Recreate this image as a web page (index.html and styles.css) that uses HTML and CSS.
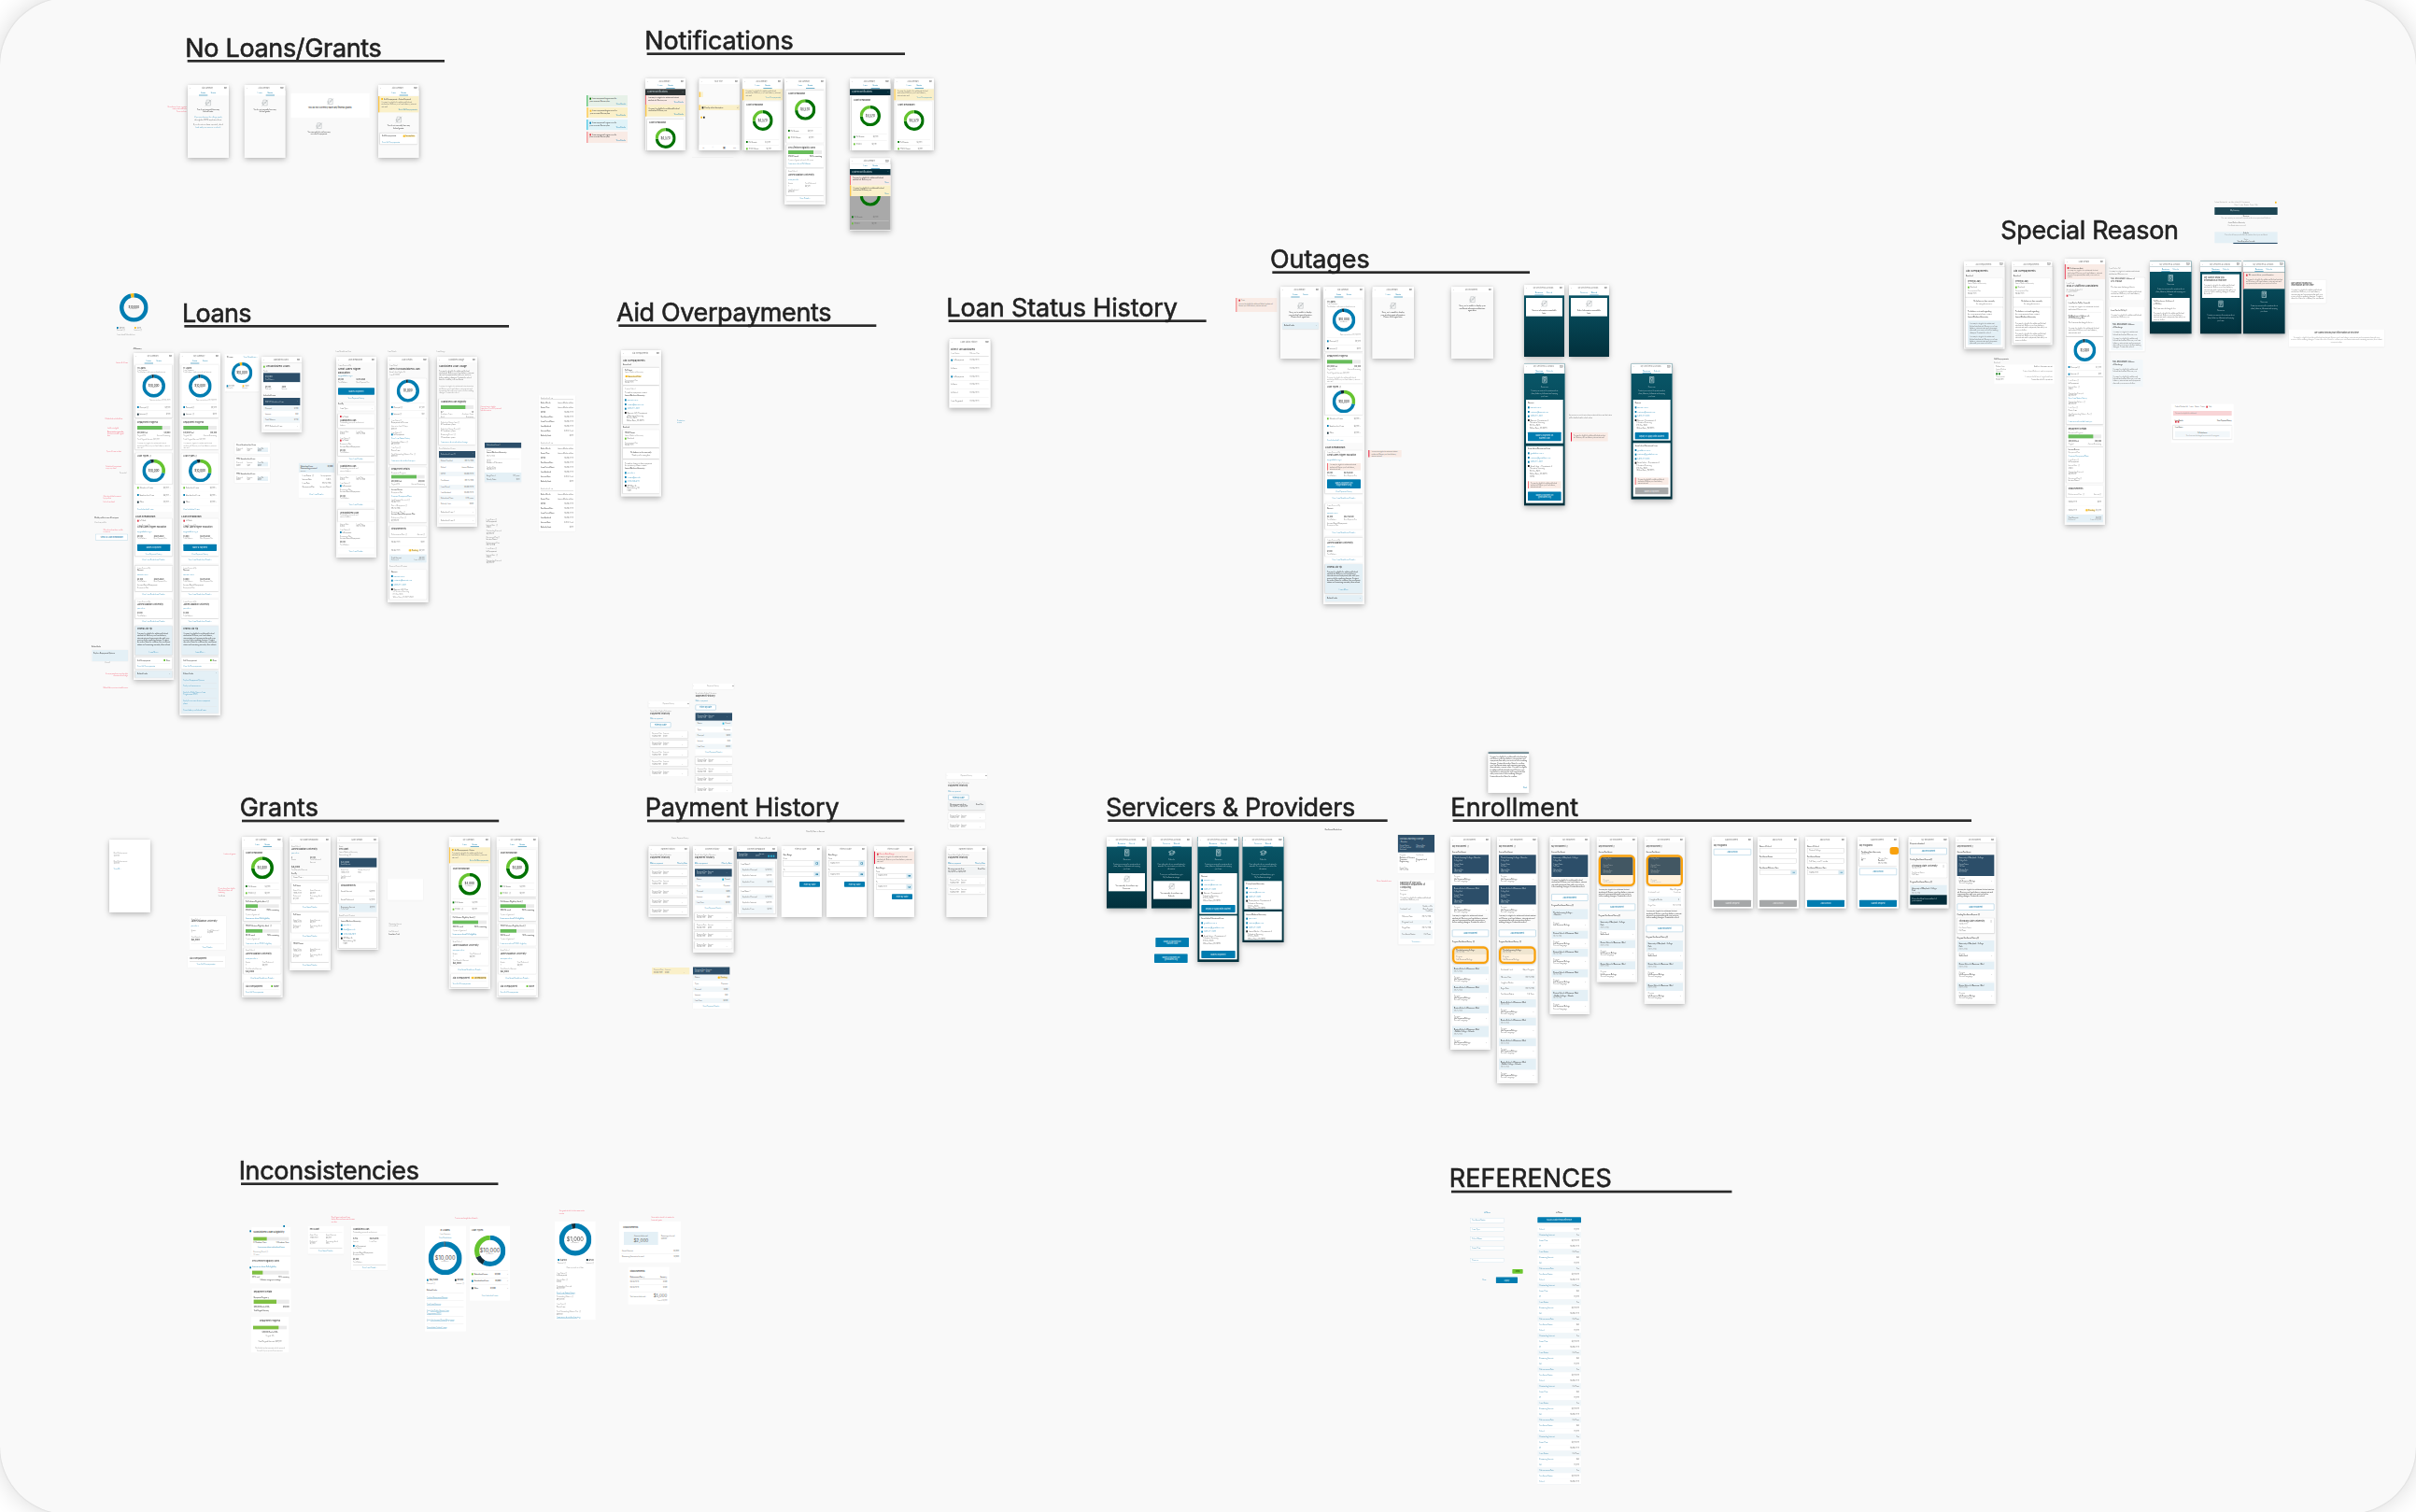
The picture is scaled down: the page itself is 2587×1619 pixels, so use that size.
FILE: index.html
```html
<!DOCTYPE html>
<html lang="en">
<head>
<meta charset="utf-8">
<title>Aid screens board</title>
<link rel="stylesheet" href="styles.css">
</head>
<body>
<main class="board" id="board"></main>
<script src="board.js"></script>
</body>
</html>
```

FILE: styles.css
```css
* { box-sizing: border-box; }
html, body { margin: 0; height: 100%; overflow: hidden; background: #fff; }
body { font-family: Inter, "Liberation Sans", sans-serif; color: #333; }
.board { position: relative; width: 2587px; height: 1623px; margin-top: -2px; border-radius: 72px; background: #f9f9f9; box-shadow: 0 0 28px rgba(0,0,0,.16), 0 0 2px rgba(0,0,0,.15); }
.group { position: absolute; width: 0; height: 0; transform: scale(.33333); transform-origin: 0 0; }
.title { position: absolute; margin: 0; font-size: 81px; line-height: 89px; height: 91px; font-weight: 400; color: #222; white-space: nowrap; border-bottom: 8px solid #2a2a2a; text-indent: -7px; -webkit-text-stroke: 1.8px #222; }
.title.plain { border-bottom-color: transparent; }

.frame { position: absolute; padding: 0 6px; font-size: 5.1px; line-height: 7px; }
.clip { display: flex; flex-direction: column; margin: 0 -6px; padding: 0 6px; height: 100%; overflow: hidden; }
.clip > *, .card > * { flex: none; }
.phone { background: #fafafa; box-shadow: 0 7px 18px rgba(0,0,0,.26), 0 0 8px rgba(0,0,0,.08); }
.panel { background: #fff; box-shadow: 0 1px 4px rgba(0,0,0,.07); }
.white, .solid { background: #fff; }
.teal { background: linear-gradient(#09586a, #02303c); color: #dfecee; }
.loose { padding: 0; }

.bar { display: flex; justify-content: space-between; align-items: center; height: 18px; margin-left: -6px; margin-right: -6px; padding: 0 7px; background: #fff; color: #777; box-shadow: 0 1px 3px rgba(0,0,0,.18); font-size: 5.8px; }
.bar i { width: 8px; height: 6px; border: 1px solid #888; background: #ccc; }
.bar b { font-weight: 400; }
.tabs { display: flex; justify-content: center; gap: 5px; height: 16px; margin-left: -6px; margin-right: -6px; background: #fff; color: #2c8bb5; }
.tabs span { width: 28px; text-align: center; line-height: 14px; }
.tabs .on { border-bottom: 2px solid #2c8bb5; font-weight: 600; }

.card { display: flex; flex-direction: column; background: #fff; padding: 0 6px; border-radius: 2px; box-shadow: 0 1px 4px rgba(0,0,0,.12); overflow: hidden; }
.f { margin-left: -6px; margin-right: -6px; border-radius: 0; box-shadow: none; }
.sharp { border-radius: 0; box-shadow: none; }
.card.tint { background: #e4f0f6; }
.card.pale { background: #f2f7fa; box-shadow: none; }
.card.navy { background: #2c4e69; }
.card.ink { background: #2e3436; }
.card.deep { background: #022c3a; }
.card.tealbox { background: #1d4654; }
.card.ok { background: #e7f1e8; border-left: 3px solid #2bb24c; }
.card.warn { background: #faf0c9; border-left: 4px solid #fcc74d; }
.card.info { background: #e0f3f8; border-left: 3px solid #18b6dd; }
.card.err { background: #f9ebe5; border-left: 3px solid #f1767c; }
.card.strong { border-left-color: #e31c3d; }
.card.yel { background: #faf0c9; }
.card.dim { background: #a9a9a9; }
.card.mist { background: #f1f3f4; }
.card.orange { background: linear-gradient(#425763 0 68%, #fff1dd 68%); border: 7px solid #f8a10d; border-radius: 16px; padding: 0 8px; }
.card.blob { background: #f8a10d; border-radius: 8px; }
.card.peach { background: linear-gradient(#efe5d0 0 45%, #fff1dd 45%); border: 7px solid #f8a10d; border-radius: 16px; }
.card.pink { background: #f8d4d6; box-shadow: none; }

.t { display: flex; justify-content: space-between; align-items: center; height: 8px; white-space: pre; color: #666; }
.t.half { display: grid; grid-template-columns: 1fr 1fr; }
.t.third { display: grid; grid-template-columns: 1fr 1fr 1fr; }
.t.tc span:last-child { background: #e4f0f6; }
.p { overflow: hidden; color: #666; text-align: left; }
.g { color: #8f8f8f; font-size: 4.8px; }
.b { font-weight: 600; color: #444; }
.k { color: #3a3a3a; font-weight: 500; }
.h { font-weight: 500; font-size: 6.6px; color: #333; }
.hh { font-weight: 500; font-size: 8px; color: #2c2c2c; }
.l { color: #4499c0; }
.r { color: #f4687c; }
.c { justify-content: center; text-align: center; }
.e { justify-content: flex-end; text-align: right; }
.s { font-size: 4.4px; }
.u { text-decoration: underline; }
.teal .t, .teal .p, .navy .t, .deep .t, .ink .t, .tealbox .t { color: #c3d3d9; }
.teal .card .t, .teal .card .p { color: #666; }
.teal .card .l { color: #4499c0; }
.teal .card .k { color: #3a3a3a; }
.orange .t { color: #a9b0b0; }

.dot { display: inline-block; width: 5px; height: 6px; margin-right: 3px; background: currentColor; vertical-align: -1px; }
.chip { padding: 0 3px; border-radius: 2px; background: #fbe7ab; color: #7a6220; font-style: normal; }
.row { display: flex; justify-content: space-between; align-items: center; padding: 0 6px; background: #fff; color: #666; }
.row.pale { background: #f0f6f9; }
.row.ref { border-bottom: 1px solid #e6eef2; }
.row.ref span:first-child { color: #4a93b5; }
.rule { height: 1px; background: #e2e2e2; }
.rule.dark { background: #aaa; }
.btn { display: flex; align-items: center; justify-content: center; text-align: center; background: #007cb0; color: #d0e7f2; border-radius: 2px; font-weight: 500; font-size: 6px; }
.btn.out { background: #fff; border: 1px solid #66aaca; color: #2383af; }
.btn.off { background: #a5a7a8; color: #e6e6e6; }
.btn.green { background: #6cc72f; color: #245a06; }
.btn.sm { align-self: flex-start; width: 66px; }
.btn.end { align-self: flex-end; width: 66px; }
.fld { display: flex; align-items: center; justify-content: space-between; padding-left: 6px; background: #fff; border: 1px solid #c4c4c4; color: #666; }
.fld.blue { border-color: #c3dce8; color: #4a93b5; }
.fld i { width: 18px; height: 100%; background: #d9ebf3; border: 5px solid #d9ebf3; box-shadow: inset 0 0 0 2px #287fa6; }
.prog { background: #ebebeb; }
.prog i { display: block; height: 100%; background: #68bd5b; }
.lime i { background: #7fc041; }
.donut { align-self: center; display: grid; place-items: center; }
.donut svg { grid-area: 1 / 1; width: 100%; height: 100%; }
.donut span { grid-area: 1 / 1; text-align: center; color: #777; line-height: 1; font-size: 4px; }
.donut b { display: block; font-size: 9px; font-weight: 500; color: #444; }
.donut.big b { font-size: 17px; font-weight: 400; }
.ico { align-self: center; stroke: #a9b0b3; fill: none; stroke-width: 1.3; }
.teal > .clip > .ico { stroke: #b5cdd3; }
.nav { display: flex; justify-content: space-around; align-items: center; color: #777; font-size: 10px; margin: 0 -6px; background: #fff; }
```

FILE: board.js
```js
const COPY = 'You may be eligible for additional federal student aid. Review your loan balance, interest rate and repayment plan with your servicer before making changes. Contact the school listed to confirm your enrollment status and remaining amounts, then submit a request online. '.repeat(2);
const COLORS = { b: '#007db1', n: '#122c38', g: '#66c430', d: '#007203', y: '#fdbb17', r: '#dc3545', c: '#1fb5dc', k: '#222' };
const ICONS = {
  none: '<path d="M6 3h9l3 3v13H6zM15 3v3h3M9 9h6M9 12h6M2 21 20 2M4 8v9M2 12h3"/>',
  doc: '<path d="M5 2h12v18H5zM8 5h6v5H8zM8 13h6M8 16h3M13 16h2" stroke-width="2"/>',
  cap: '<path d="M2 9 11 5l9 3-9 5zM6 11v5l5 2 6-3v-5M20 8v5M3 17h5" stroke-width="2"/>'
};

function inline(s) {
  return s
    .replace(/\{(\w)\}/g, (m, c) => `<i class="dot" style="color:${COLORS[c]}"></i>`)
    .replace(/\[(.+?)\]/g, '<em class="chip">$1</em>');
}
const spans = s => s.split('|').map(p => `<span>${inline(p)}</span>`).join('');

/* Whole words of the sample copy that fill the given height. */
function copyFor(height) {
  const cut = COPY.slice(0, Math.floor(height / 7) * 36);
  return cut.slice(0, cut.lastIndexOf(' '));
}

function donut(size, segs, label) {
  let at = 0;
  const w = size > 95 ? 6.8 : 6.4, r = 22 - w / 2;
  const arcs = segs.split(',').map(s => {
    const n = +s.slice(1);
    const c = `<circle cx="22" cy="22" r="${r}" fill="none" stroke="${COLORS[s[0]]}" stroke-width="${w}" pathLength="100" stroke-dasharray="${n} ${100 - n}" stroke-dashoffset="${-at}"/>`;
    at += n;
    return c;
  }).join('');
  return `<svg viewBox="0 0 44 44"><g transform="rotate(-90 22 22)">${arcs}</g></svg><span><b>${label}</b>Total Balance</span>`;
}

/* Each builder returns [top, height, html, extra class, extra style]. */
const BUILD = {
  bar: (y, a) => [y, 18, `<span>‹</span><b>${a}</b><i></i>`],
  tabs: (y, a) => {
    const [on, l = 'Loans', r = 'Grants'] = a.split(' ');
    return [y, 16, `<span class="${on === '0' ? 'on' : ''}">${l}</span><span class="${on === '1' ? 'on' : ''}">${r}</span>`];
  },
  t: (y, a) => [y - 4, 8, spans(a)],
  p: (y, a) => {
    const [h, ...rest] = a.split(' ');
    return [y, +h, rest.join(' ') || copyFor(+h)];
  },
  card: (y, a) => [y, +a, ''],
  row: (y, a) => { const [h, ...r] = a.split(' '); return [y, +h, spans(r.join(' '))]; },
  rule: y => [y, 1, ''],
  btn: (y, a) => { const [h, ...r] = a.split(' '); return [y, +h, `<span>${r.join(' ')}</span>`]; },
  fld: (y, a) => { const [h, i, ...r] = a.split(' '); return [y, +h, `<span>${r.join(' ')}</span>${i === '1' ? '<i></i>' : ''}`]; },
  prog: (y, a) => { const [h, v] = a.split(' '); return [y, +h, `<i style="width:${v}%"></i>`]; },
  donut: (y, a) => { const [s, g, l = ''] = a.split(' '); return [y, +s, donut(+s, g, l), +s > 95 ? 'big' : '', `width:${s}px`]; },
  ico: (y, a) => [y, 24, ICONS[a]],
  nav: (y, a) => [y, 16, spans(a)]
};

function frame(head, lines) {
  const [x, y, w, h, cls = ''] = head.split(' ');
  const el = document.createElement('section');
  el.className = 'frame ' + cls.replace(/\./g, ' ');
  el.style.cssText = `left:${x}px;top:${y}px;width:${w}px;height:${h}px`;
  const root = document.createElement('div');
  root.className = 'clip';
  el.append(root);
  const stack = [{ el: root, cursor: +y, end: Infinity }];
  for (const line of lines) {
    const m = line.match(/^(\d+) (\w+)((?:\.\w+)*) ?(.*)$/);
    const [from, height, html, extra = '', css = ''] = BUILD[m[2]](+m[1], m[4]);
    while (stack.length > 1 && from >= stack[stack.length - 1].end - 1) stack.pop();
    const parent = stack[stack.length - 1];
    let node;
    if (m[2] === 'ico') {
      node = document.createElementNS('http://www.w3.org/2000/svg', 'svg');
      node.setAttribute('viewBox', '0 0 22 22');
      node.setAttribute('width', 24);
    } else node = document.createElement('div');
    const border = /\.(orange|peach)/.test(m[3]) ? 7 : 0;
    node.setAttribute('class', `${m[2]} ${m[3].replace(/\./g, ' ')} ${extra}`);
    node.setAttribute('style', `margin-top:${from - parent.cursor}px;height:${height}px;${css}`);
    node.innerHTML = html;
    parent.el.append(node);
    parent.cursor = from + height;
    if (m[2] === 'card') stack.push({ el: node, cursor: from + border, end: from + height });
  }
  return el;
}

function group(x, y, titles, spec) {
  const g = document.createElement('article');
  g.className = 'group';
  g.style.cssText = `left:${x}px;top:${y + 2}px`;
  let head = null, lines = [];
  const flush = () => { if (head) g.append(frame(head, lines)); };
  for (const raw of spec.split('\n')) {
    const line = raw.trim();
    if (!line) continue;
    if (line[0] === '@') { flush(); head = line.slice(1).trim(); lines = []; } else lines.push(line);
  }
  flush();
  for (const [text, left, rule, width, spacing = 0, plain] of titles) {
    const h = document.createElement('h2');
    h.className = 'title' + (plain ? ' plain' : '');
    h.textContent = text;
    h.style.cssText = `left:${left}px;top:${rule - 83}px;width:${width}px;letter-spacing:${spacing}px`;
    g.append(h);
  }
  document.getElementById('board').append(g);
}

/* ---------- No loans / grants ---------- */
group(0, 0, [['No Loans/Grants', 602, 192, 826, -1]], `
@ 516 337 83 26 loose
343 t.r.e.s If user has no loans or grants
348 t.r.e.s empty state with links
358 t.r.e.s See notes here
@ 603 273 132 234 phone
273 bar Aid Summary
291 tabs 0
318 ico none
352 t.k.c You do not currently have any
359 t.k.c federal loans.
376 t.l.c If you need money for college, apply
386 t.c through the FAFSA application form.
399 t.c If you do not see loans expected, check
408 t.l.c back with your servicer or school.
@ 785 273 132 234 phone
273 bar Aid Summary
291 tabs 1
318 ico none
352 t.k.c You do not currently have any
359 t.k.c federal grants.
@ 934 300 253 78 white
314 ico none
347 t.k.c.h You do not currently have any federal grants.
@ 976 392 98 44 loose
392 ico none
423 t.k.c You currently do not have any
431 t.k.c records of repayment.
@ 1215 273 131 234 phone
273 bar Aid Summary
291 tabs 1
309 card.warn.f 52
318 t.k {y}Aid Overpayment - Action Required
325 p 21
352 t.l.e.b Go to Aid Overpayments
372 ico none
403 t.k.c You do not currently have any
412 t.k.c federal grants.
428 card 35
437 t.b Aid Overpayments|[{y}Incomplete]
457 t.l View Aid Overpayments
`);

/* ---------- Notifications ---------- */
const noteAlert = (y, h, kind, dot) => `
@ 85 ${y} 131 ${h} loose
${y} card.${kind}.sharp ${h}
${y + 11} t.k {${dot}}Loan repayment begins soon for
${y + 18} t.k your account. Review plan
${y + h - 8} t.l.e.b View Details`;
const warnPhone = `
252 bar Aid Summary
268 tabs 1
286 card.warn.f 36
289 p 21
314 t.l.e View Overpayments
325 card 164
337 t.h Grant Breakdown
354 donut 66 d74,g26 $4,570
448 rule
456 t {d}Pell Grants|$3,500|
467 rule
478 t {g}TEACH Grant|$1,070|`;
group(600, 0, [['Notifications', 278, 169, 829, -.4]], `
${noteAlert(306, 36, 'ok', 'd')}
${noteAlert(345, 33, 'warn', 'y')}
${noteAlert(384, 34, 'info', 'b')}
${noteAlert(422, 37, 'err', 'r')}
@ 273 252 129 231 phone
252 bar Aid Summary
268 tabs 1
286 card.ink.f 20
296 t.h System Notifications|⌄
306 card.err.f 30
311 p.k 14
329 t.l.e.b View Details
336 card.warn.f 38
345 p.k 14
366 t.l.e.b View Details
383 card 125
394 t.h Grant Breakdown
411 donut 66 d74,g26 $4,570
@ 423 504 133 3 loose
505 rule
@ 445 252 131 231 phone
252 bar Your Title
337 card.warn.f 17
346 t.k {k}Overlay alert description|✕
377 t {y}{k}
466 nav ⌂|♢|▣|⋯
@ 446 295 6 17 loose
295 card.warn.sharp 17
@ 585 252 129 231 phone${warnPhone}
@ 720 252 132 405 phone
252 bar Aid Summary
268 tabs 1
290 card 168
301 t.h Grant Breakdown
319 donut 67 d74,g26 $4,570
408 rule
420 t {d}Pell Grants|$3,500|
431 rule
442 t {g}TEACH Grant|$1,070|
466 card 72
474 t.k.h Pell Lifetime Eligibility Used
483 prog 12 75
502 t.b 450.0% used|150% remaining
515 t.g 5 years of grant aid used of 6 years
527 t.l Learn more about Pell lifetime
543 card 84
551 t.g Grant School
562 t.k.h James Madison University
576 t.l www.jmu.edu
590 t.g.half Grants|Total Disbursed
597 t.half 2|$4,570
610 t.g Last Disbursed
617 t $570.00
630 card 16
637 t.l.c View Details ›
@ 930 252 131 231 phone
252 bar Aid Summary
268 tabs 1
286 card.deep.f 20
296 t.h System Notifications|⌄
310 card 190
322 t.h Grant Breakdown
339 donut 67 d74,g26 $4,570
429 rule
440 t {d}Pell Grants|$3,500|
452 rule
463 t {g}TEACH|$1,070|
@ 1072 252 128 231 phone${warnPhone}
@ 930 508 131 232 phone
508 bar Aid Summary
526 tabs 1
543 card.deep.f 20
552 t.h System Notifications|⌃
563 card.err.f 31
568 p.k 14
587 t.l.e.b View
595 card.warn.f 35
601 p.k 14
622 t.l.e.b View
630 card.dim.f 108
595 donut 67 d74,g26
697 t {d}Pell Grants|$3,500|
708 rule
718 t {g}TEACH|$1,070|
`);

/* ---------- Loans ---------- */
const loanBody = `
234 bar My Summary
252 tabs 0
273 card 168
283 t.h 11 Loans
289 t.g Loan Summary
296 t.g Total balance with principal and interest
303 donut 74 b97,n3 $10,000
386 t.g.e.s Data reported as of 02/23/2020
396 rule
408 t {b}Principal ⓘ|$9,500
419 rule
431 t {n}Interest ⓘ|$500
447 card 97
457 t.h Repayment Progress
468 prog 12 75
490 t.b $30,000 Paid|$10,000
498 t.g Original 40k|Amount Remaining
511 t.g Total Original Amount: $40,000
521 p.g 21
556 card 98
566 t.h Loan Types ⓘ
575 donut 74 g29,b66,n5 $10,000
656 card.sharp 22
667 t {g}Subsidized Loans|$3,000  ›
679 card.sharp 22
690 t {b}Unsubsidized Loan|$6,000  ›
702 card.sharp 22
713 t {n}Other|$1,000  ›
726 card.sharp 18
735 t.l View Individual Loans
758 t.k.hh Loan Breakdown
766 card 120
773 t.s {r}In Default
787 t.g Loans Serviced By
794 t.k.h Great Lakes Higher Education
808 t.l mygreatlakes.org ↗
822 t.b.half $5,000|$02/15/2020
829 t.g.half Total Balance|Next Payment Due
848 btn 22 Make a Payment
879 t.l.c View Payment History
891 card.sharp 18
899 t.l.c View Loan Breakdown Details ›
917 card 82
924 t.g Loans Serviced By
931 t.k Navient
946 t.l navient.com ↗
960 t.b.half $4,000|$02/15/2020
968 t.g.half Total Balance|Next Payment Due
980 t Income-Based Repayment
987 t.g Repayment Plan
1002 card.sharp 17
1010 t.l.c View Loan Breakdown Details ›
1026 card 60
1034 t.g Loans Serviced By
1042 t.k.h James Madison University
1055 t.l jmu.edu ↗
1070 t.b $1,000
1078 t.g Total Balance
1089 card.sharp 17
1097 t.l.c View Loan Breakdown Details ›
1111 card.tint 93
1121 t.k.h Federal Aid Tip
1132 p.k 49
1194 t.l.c Learn More ›
1211 card 38
1221 t.k Aid Overpayment|{g}None
1231 rule
1240 t.l View Aid Overpayments`;
const loanCard = (y, name, status) => `
${y} card 37
${y + 10} t.k.h ${name}
${y + 17} t.g Outstanding principal and
${y + 24} t.g interest balance
${y + 38} card.sharp 84
${y + 46} t.g.half Interest Rate|Loan Date
${y + 53} t.half 3.76%|09/25/2018
${y + 65} t.g Loan Status ⓘ
${y + 73} t.s {${status}}In Repayment
${y + 85} t.g Repayment Plan
${y + 92} t Income-Based Repayment
${y + 105} t.k $3,000
${y + 112} t.g Total Balance
${y + 125} card.sharp 17
${y + 133} t.l.c View Loan Details ›`;
const miniLoan = (y, n) => `
@ 514 ${y} 113 37 panel
${y + 7} t.k ${n} Unsubsidized Loan
${y + 20} t.g.third.tc Principal|Interest|Total Bal.
${y + 27} t.third.tc $800|$30|$830`;
group(80, 300, [['Loans', 352, 144, 1043, -2]], `
@ 135 40 110 142 loose
42 donut 92 b96,y4 $10,000
153 t {b}$9,500|{y}$500|
160 t.g Principal ⓘ|Interest ⓘ|
175 t.g Loan details & breakdown
@ 188 214 60 10 loose
219 t.b.s All Summary
@ 120 260 51 8 loose
265 t.r.e.s Latest pull of loans
@ 98 441 71 8 loose
445 t.r.s If default show default first
@ 105 470 66 34 loose
476 t.r.s Link if not eligible
487 t.r.s.b Repayment progress bar
493 t.r.s for servicers with original
499 t.r.s here
@ 102 546 70 8 loose
550 t.r.s Types of loans in chart
@ 100 595 66 30 loose
599 t.r.s Subsidized loan interest
605 t.r.s in pop-up detail
619 t.g.s.e See modal
@ 92 691 76 30 loose
695 t.r.s Order should list from most
701 t.r.s by type first
713 t.r.s Link to loan detail
@ 64 758 100 26 loose
763 t.b.s Would you like to view all loan types
779 t.g.s View loan portfolio
@ 92 797 76 14 loose
801 t.r.s Only show when there is a link
808 t.r.s to servicer
@ 66 813 105 25 loose
815 btn.out 21 View All Loan Breakdown
@ 55 1173 60 10 loose
1178 t.b.s Related Links
@ 55 1188 116 36 panel
1188 card.tint.f 36
1198 t.k Explore Repayment Options
@ 97 1223 60 8 loose
1228 t.g.s View all
@ 92 1261 79 16 loose
1265 t.r.e.s If overpayment has none then hide
1271 t.r.e.s otherwise show badge
@ 78 1305 93 8 loose
1309 t.r.e.s Related links open in external browser
@ 189 234 130 1050 phone ${loanBody}
1255 card.tint 22
1264 t.k Related Links|⌄
@ 337 234 131 1164 phone ${loanBody}
1255 card.tint 136
1264 t.k Related Links|⌃
1284 t.l Explore Repayment Options
1294 rule
1303 t.l Find your loan servicer
1313 rule
1323 t.l Apply for Public Service Loan
1330 t.l Forgiveness (PSLF)
1341 rule
1351 t.l Apply for income-driven repayment
1359 t.l plans
1370 rule
1380 t.l Consolidate your federal loans
@ 482 238 110 120 panel
248 t.k 11 Loans|
248 t.l.e View Breakdown ›
264 donut 67 b96,y4 $10,000
340 t {b}$9,500|{y}$500|
347 t.g.s Principal ⓘ|Interest ⓘ|
@ 600 246 130 243 phone
246 bar Subsidized Loans
277 t.hh {g}Unsubsidized Loans
291 t.g Totals
298 card.navy.sharp 30
311 t.b.h $5,000
318 t.s Total Balance
328 card.sharp 29
342 t.b.half $5,000|$200
350 t.g.half Principal|Interest
371 t.k Individual Loans
378 card.navy.sharp 24
390 t DIRECT Subsidized Loan|⌃
402 row.pale 18 Principal|$200
420 row 18 Interest|$50
438 row.pale 19 Total Balance|$250
459 card 20
469 t STFD Subsidized Loan|⌄
${miniLoan(521, 'Direct')}
${miniLoan(567, 'FFEL')}
${miniLoan(614, 'FFEL')}
@ 719 588 116 111 panel
588 card.tint.f 30
597 t.k Subsidized Loan|$1,000
605 t.b Outstanding principal
612 t.g amount
622 row 14 Loan Status ⓘ|In repayment
634 row 12 Interest Rate|3.76%
647 row 12 Loan Date|09/25/2018
659 row 12 Repayment Plan|Income-Based
689 t.l.c View Loan Details ›
@ 838 223 66 10 loose
228 t.g Loan Breakdown View
@ 840 246 129 645 phone
246 bar Loan Breakdown
275 t.g Loans Serviced By
286 t.hh Great Lakes Higher
296 t.hh Education
307 t.l mygreatlakes.org ↗
320 t.b.half $5,000|02/15/2020
328 t.g.half Total Balance|Next Payment Due
346 btn 22 Make a Payment
380 t.l.c View Payment History
391 rule
398 t.k Sort By
403 card 16
411 t Loan Type|⌄
430 card 45
438 t.s {r}In Default
451 t.k.h Subsidized Loan
458 t.g Outstanding principal and interest
465 t.g balance
480 card 84
488 t.g.half Interest Rate|Loan Date
494 t.half 3.76%|09/25/2018
507 t.g Loan Status ⓘ
515 t.s {r}In Default
527 t.g Repayment Plan
534 t Income-Based Repayment
547 t.k $3,000
554 t.g Total Balance
567 card 16
574 t.l.c View Loan Details ›
${loanCard(588, 'Subsidized Loan', 'b')}
${loanCard(737, 'Unsubsidized Loan', 'b')}
`);

const facts = (y, step, n) => {
  const names = ['Loan Status ⓘ', 'Interest Rate ⓘ', 'Outstanding Principal', 'Repayment Plan ⓘ', 'Disbursement Date'];
  const vals = ['In Repayment', '3.76%', '$3,000.00', 'Income-Based', '09/25/2018'];
  let s = '';
  for (let i = 0; i < n; i++) s += `\n${y + i * step} t.g ${names[i % 5]}\n${y + i * step + 7} t ${vals[i % 5]}`;
  return s;
};
const factTable = y => [`${y} t.g.s Unsubsidized Loan`, `${y + 5} rule.dark`].concat(
  ['<b>School Code</b>|James Madison Univ', '<b>Award Year</b>|James Madison Univ', '<b>CIP ID</b>|04/08/2020', '<b>Enrollment Date</b>|04/08/2020', '<b>Loan Period Start</b>|04/08/2020', '<b>Last Updated</b>|04/08/2020', '<b>Interest Rate</b>|3.76% Fixed', '<b>Subsidy Limit</b>|$500']
    .map((r, i) => `${y + 17 + i * 15} t ${r}`)).join('\n');

group(340, 300, [['Aid Overpayments', 967, 142, 828, -1.1]], `
@ 225 223 60 10 loose
228 t.g Loan Details
@ 382 223 60 10 loose
228 t.g Loan Usage
@ 225 246 131 789 phone
246 bar Loan Details
274 t.g Loan Detail
284 t.k.hh Direct Unsubsidized Loan
295 t.g Great Lakes Higher Ed
303 t.g Loan ID 00001
316 card 128
319 donut 73 b97,n3 $1,000
395 rule
408 t {b}Principal ⓘ|$2,500
419 rule
430 t {b}Interest ⓘ|$50
444 card 148
450 t.g Loan Status ⓘ
457 t Repayment in Process
469 t.g Interest in Last 30 days
477 t $50.00
489 t.g Loan Status ⓘ
496 t {b}In Repayment
507 t.l View Loan Status History
520 t.g Outstanding Balance ⓘ
527 t $9,500.00
539 t.g Loan Type ⓘ
546 t Direct Loan
559 t.g Total Outstanding Balance Due ⓘ
566 t $100.00
581 t.l Learn more about this loan type
601 card 62
608 t.h Repayment Details
618 t.g Repayment Progress
626 prog 11 76
647 t.b $30,000 Paid|$10,000
655 t.g Original 40k|Amount Remaining
666 card 112
674 t.k Income Driven
682 t.g Repayment Plan
693 t.l Compare Repayment Plans
705 t.g Last Payment Received ⓘ
713 t 04/16/2020
724 t.g Date of Repayment ⓘ
732 t 09/25/2018
744 t.g Repayment Plan ⓘ
751 t.k Income-Based Repayment Plan
764 t.g Delinquency Date ⓘ
771 t $1,000.00
790 card 35
799 t.h Disbursements
817 t.g Disbursement Date ⓘ|Amount ⓘ
828 card.sharp 24
841 t 04/16/2020|$500
854 card.sharp 27
868 t 04/16/2020|[{y}Pending] $3,500
881 card.tint.sharp 26
891 t Total Amount|$4,000
898 t.g Disbursed|Loan of $5,000
919 t.g Servicer Point of Contact
930 card 95
937 t.k Navient
951 t.l {b}navient.com ↗
965 t.l {b}contactus@navient.com
979 t.l {b}1-800-722-1300
993 t {k}Navient - U.S. Dept
1001 t.g     of Education Servicing
1009 t.g     P.O. Box 9635
1017 t.g     Wilkes-Barre, PA 18773-9635
@ 384 246 129 546 phone
246 bar Subsidized Usage
277 t.k.hh Subsidized Loan Usage
288 p 42
338 p.g 35
382 card 60
390 t.h Subsidized Loan Eligibility
402 prog 12 75
423 t.b 4.7|1.3
430 t.g Academic Years|Academic Years
438 t.g Used|Remaining
445 card 84
457 t.g Subsidized Usage Limit ⓘ
464 t 6.0 academic years
477 t.g Subsidized Usage Period ⓘ
484 t 4.7 academic years
497 t.g Remaining Period ⓘ
504 t 1.3 academic years
520 t.l Learn more about subsidized usage
541 t.g View Subsidized Loans
549 card.navy.sharp 22
559 t Subsidized Loan 01|⌃
571 row.pale 17 School Enrolled|09/25/2018
588 row 27 School|James Madison
615 row.pale 15 CIP ID|04/08/2020
630 row 27 Enrollment|09/25/2018
657 row.pale 17 Loan Period|04/08/2020
674 row 17 Last Updated|04/08/2020
691 row.pale 18 Subsidized Time|3.70 years
709 row 18 Subsidy Limit|$500
733 card 20
744 t Subsidized Loan 2|⌄
761 card 20
772 t Subsidized Loan 3|⌄
@ 524 403 72 19 loose
407 t.r.s If a user has no eligible
413 t.r.s loans show 0 out of 6 years and
418 t.r.s hide this section
@ 537 521 118 128 panel
521 card.navy.f.sharp 18
530 t.k Subsidized Loan 1
546 t.g School
553 t.k James Madison University
565 t.g 09/25/2018
575 rule
579 t.g CIP ID
586 t Childhood Education
601 t.g Enrolled Date
608 t 04/08/2020
618 card.tint.f 31
627 t.s Usage Period|1.50 years
639 t.s Subsidy Status|$500
@ 542 762 66 155 loose ${facts(768, 19, 8)}
@ 711 370 117 437 panel
${factTable(378)}
${factTable(524)}
${factTable(670)}
@ 975 225 129 470 phone
225 bar Aid Overpayments
257 t.k.hh Aid Overpayments
271 t.g.b Unresolved
281 card 55
289 t.k Pell Grant
296 t.g James Madison University
309 t [{y}Unresolved Debt]
321 t.g Overpayment Date
328 t 04/16/2020
340 card 122
350 t.g Contact School
362 t To make a repayment contact
370 t.k James Madison University
385 t.l {b}navient.com ↗
399 t.l {b}contact@navient.com
413 t.l {b}1-800-722-1300
426 t {k}Navient - U.S. Department
435 t     of Education Servicing
443 t     P.O. Box 9635
451 t     Wilkes-Barre, PA 18773
472 t.g.b Resolved
481 card 56
489 t.k TEACH Grant
498 t.g James Madison University
509 t {g}Resolved
523 t.g Overpayment Date
529 t 04/16/2020
541 card 32
553 t.k.c No balance is due currently.
562 t.c Thank you for using this.
577 card 108
589 t To make a change to this repayment
596 t for questions, please contact
604 t.k James Madison University
619 t.l {b}jmu.edu ↗
633 t.l {b}contact@jmu.edu
647 t.l {b}1-540-568-6211
660 t {k}800 Main St
668 t     Harrisonburg, VA
677 t     22807
@ 1155 446 40 14 loose
450 t.l Contact in
456 t.l popup
`);

/* ---------- Loan status history ---------- */
group(640, 300, [['Loan Status History', 1127, 127, 828, -.4]], `
@ 1129 189 133 221 phone.solid
189 bar Loan Status History
221 t.hh Direct Unsubsidized
234 t.half.g Loan Status|Effective Date
244 rule.dark
257 t.half {b}In Repayment|02/04/2020
270 rule
283 t.half In Grace|02/04/2020
296 rule
310 t.half {b}In Repayment|02/04/2020
323 rule
335 t.half In Grace|02/04/2020
349 rule
361 t.half In School|02/04/2020
375 rule
387 t.half Loan Originated|02/04/2020
400 rule
`);

/* ---------- Outages ---------- */
const loanLines = loanBody.split('\n').filter(Boolean);
const slice = (a, b, dy) => loanLines
  .filter(l => parseInt(l) >= a && parseInt(l) < b)
  .map(l => l.replace(/^\d+/, n => +n + dy)).join('\n');
const contact = (y, name, mail) => `
${y} t.k ${name}
${y + 14} t.l {b}${mail}.com ↗
${y + 28} t.l {b}customer@${mail}.com
${y + 42} t.l {b}1-800-722-1300
${y + 55} t {k}${name.slice(0, 12)} - Department of
${y + 63} t     Education Servicing
${y + 71} t     P.O. Box 9635
${y + 79} t     Wilkes-Barre, PA 18773`;
group(1300, 250, [['Outages', 187, 121, 827, -.3]], `
@ 70 207 132 45 loose
207 card.err.sharp 45
215 t {r}Error
222 p.s 21
@ 213 171 129 231 phone
171 bar Aid Summary
189 tabs 0
220 ico none
253 t.k.c Sorry, we're unable to display
261 t.k.c your student loans information.
269 t.k.c Please check again later.
286 card.tint 21
296 t.k Related Links|⌄
@ 351 171 132 1020 phone
171 bar Aid Summary
189 tabs 0
${slice(273, 556, -62)}
${slice(556, 766, -72)}
697 card 138
704 t.g Loans Serviced By
713 t.k.h Great Lakes Higher Education
727 t.l mygreatlakes.org ↗
738 card.err.sharp 23
740 p.s 21
770 t.b.half $5,000|02/15/2020
777 t.g.half Total Balance|Next Payment Due
790 btn 29 Make a Payment on<br>mygreatlakes.org
829 t.l.c View Payment History
841 card.sharp 17
850 t.l.c View Loan Breakdown Details ›
${slice(917, 1205, -49)}
1162 card.tint 20
1171 t.k Related Links|⌄
@ 508 171 134 231 phone
171 bar Aid Summary
189 tabs 1
220 ico none
253 t.k.c Sorry, we're unable to display
261 t.k.c your student grants information.
269 t.k.c Please check again later.
@ 762 171 135 231 phone
171 bar My Enrollment
200 ico none
232 t.k.c Sorry, we're unable to display your
240 t.k.c enrollment information at this time.
248 t.k.c again later.
@ 996 165 129 231 phone.teal
165 bar My Servicers & Schools
183 tabs 0 Servicers Schools
207 card.sharp 59
213 ico none
247 t.k.c Servicer information unavailable
256 t.k.c later.
@ 1140 165 129 231 phone.teal
165 bar My Servicers & Schools
183 tabs 1 Servicers Schools
207 card.sharp 59
213 ico none
247 t.k.c School information unavailable
256 t.k.c later.
@ 996 418 131 456 phone.teal
418 bar My Servicers & Schools
434 tabs 0 Servicers Schools
458 ico doc
492 t.c Servicers
505 t.c.s Contact your servicer for questions about
513 t.c.s plans, balances, deferment and repaying
522 t.c.s your loans.
534 card.sharp 140
${contact(545, 'Navient', 'navient')}
638 btn 29 Make a Payment on<br>navient.com
683 card.sharp 183
${contact(692, 'Great Lakes Educational Loan', 'greatlakes')}
782 t     53704
796 card.err.sharp 23
798 p.s 21
829 btn 30 Make a Payment on<br>greatlakes.org
@ 1140 580 172 16 loose
584 t.s If a servicer is out of service then an alert will show and the button
591 t.s will be disabled until it is back online
@ 1146 639 119 29 loose
639 card.err.strong.sharp 29
645 p.s 21
@ 496 696 106 23 loose
696 card.err.strong.sharp 23
698 p.s 21
@ 1340 418 132 436 phone.teal
418 bar My Servicers & Schools
434 tabs 0 Servicers Schools
458 ico doc
492 t.c Servicers
505 t.c.s Contact your servicer for questions about
513 t.c.s plans, balances, deferment and repaying
522 t.c.s your loans.
534 card.sharp 131
${contact(545, 'Navient', 'navient')}
639 btn 22 Repay or Apply with Navient
673 card.sharp 172
${contact(682, 'Great Lakes Educational Loan', 'greatlakes')}
784 card.err.sharp 23
786 p.s 21
816 btn.off 22 Make a Payment
`);

/* ---------- Special reason ---------- */
group(2080, 200, [['Special Reason', 194, 178, 600, -1.1, 1]], `
@ 874 46 202 136 loose
50 t.g.s Federal Student Aid - an office of the U.S. Department|{y}
58 t.g.s.c Home   Loans   Grants   Forms   Help
66 card.tealbox.sharp 24
77 t.b                                    My Activity
95 t.k.c.s Servicers
100 t.g.s.c You can contact your servicers for questions about repayment and balances
115 t.s                                    James Madison University
125 t.g.s                                    Enrollment status on record
145 card.tint.sharp 36
149 t.k.c.s Schools
154 t.g.s.c Your schools have provided the information about your enrollment
168 t.g.s.c Status
176 t.k.c.s View all my school records
@ 934 179 142 4 loose
179 card.navy.sharp 4
@ 69 239 131 282 phone
239 bar Aid Overpayments
269 t.b.hh Aid Overpayments
286 t.b Resolved
294 card 62
303 t.k.h Perkins Loan
310 t.g James Madison University
323 t {g}Resolved
335 t.g Overpayment Date
342 t 04/16/2020
356 card 30
368 t.k.c No balance is due currently.
377 t.c for using this service.
388 card 128
401 t.k For balance or to ask regarding
409 t the overpayment please contact
417 t.b James Madison University
430 card.tint.sharp 78
437 p 35
479 p 28
@ 222 239 131 269 phone
239 bar Aid Overpayments
269 t.b.hh Aid Overpayments
286 t.b Resolved
294 card 62
303 t.k.h Perkins Loan
310 t.g James Madison University
323 t {g}Resolved
335 t.g Overpayment Date
342 t 04/16/2020
356 card 30
368 t.k.c No balance is due currently.
377 t.c for using this service.
388 card 114
401 t.k For balance or to ask regarding
409 t the overpayment please contact
417 t.b James Madison University
435 p 28
468 p 28
@ 392 231 130 855 phone
231 bar Loan Details
249 card.err.strong.f 48
261 t.k {r}You have an alert
266 p 28
311 t.g Loan Detail
319 t.b.hh FFELP Stafford Subsidized
330 t.g Great Lakes Higher Ed
337 t.g Loan ID 00001
350 t {r}Default
364 card 116
373 t.k Loan Paid in Full by Consolid
383 p 14
404 rule
415 t.b Full Disclosure: Address of...
422 t.b A TPD Discharge Due
435 t The loan was discharged due to...
451 p 21
482 card 127
489 donut 72 b97,n3 $1,000
567 rule
579 t {b}Principal ⓘ|$2,500
590 rule
602 t {b}Interest ⓘ|$50
612 card 150${facts(623, 20, 3)}
679 t.l View Loan Status History
691 t.g Outstanding Balance ⓘ
698 t $9,500.00
710 t.g Loan Type ⓘ
717 t Direct Loan
730 t.g Total Outstanding Balance Due ⓘ
737 t $100.00
753 t.l Learn more about this loan type
769 card 66
778 t.h Repayment Details
790 t.g Repayment Progress
796 prog 12 75
818 t.b $30,000 Paid|$10,000
826 t.g Original|Amount Remaining
837 card 113
845 t.k Income Driven
853 t.g Repayment Plan
864 t.l Compare Repayment Plans${facts(876, 20, 4)}
960 card 36
969 t.h Disbursements
988 t.g Disbursement Date ⓘ|Amount ⓘ
998 card.sharp 26
1013 t 04/16/2020|$500
1025 card.sharp 27
1039 t 04/16/2020|[{y}Pending] $3,500
1053 card.tint.sharp 25
1062 t Total Amount|$4,000
1069 t.g Disbursed|Loan of $5,000
@ 166 548 193 84 loose
554 t.b Aid Overpayments
566 t.g.s Resolved
571 card.sharp 62
577 t.s Perkins Loan|Unable to determine amount
586 t.g.s James Madison|
592 t.g.s University|Contact James Madison to make a repayment
601 t.s {d}{d}|
610 t.g.s Overpayment|Loans paid in full are no longer listed here
618 t.s 04/16/2020|Contact the school for questions
@ 535 256 115 107 loose
261 t.g Loan Paid in Full
269 p 14
292 card 71
296 t.b FULL DISCLOSURE: Address of
305 t.b OF A TPD DUE
322 t The loan was discharged due to
334 p 21
@ 535 386 115 143 panel
397 t.k Loan Paid in Full by C
408 p 14
433 card.pale 92
442 t.b FULL DISCLOSURE: Address
450 t.b of Discharge
464 p 14
484 p 35
@ 541 555 103 87 loose
555 card.pale 87
562 t.b FULL DISCLOSURE: Address
570 t.b of Discharge
582 p 14
606 p 28
@ 666 239 134 233 phone.teal
239 bar My Servicers & Schools
257 tabs 0 Servicers Schools
281 ico doc
314 t.c Servicers
328 t.c.s Contact your servicer for questions about
336 t.c.s plans, balances, deferment and repaying your
345 t.c.s loans.
357 card.sharp 76
367 t.b Full Disclosure: Address of
375 t.b a TPD Due
390 t The loan was discharged due
402 p 28
@ 828 239 132 233 phone.teal
239 bar My Servicers & Schools
257 tabs 0 Servicers Schools
281 card.sharp 76
293 t.k.h We cannot show you
302 t.k.h information at this time
313 p 35
364 ico doc
398 t.c Servicers
412 t.c.s Contact your servicer for questions about
420 t.c.s plans, balances, deferment and repaying
429 t.c.s your loans.
@ 966 239 134 233 phone.teal
239 bar My Servicers & Schools
257 tabs 0 Servicers Schools
274 card.err.f 54
284 t.b {r}We cannot show you information
294 p 28
334 ico doc
369 t.c Servicers
383 t.c.s Contact your servicer for questions about
391 t.c.s plans, balances, deferment and repaying
400 t.c.s your loans.
@ 1114 300 118 74 panel
310 t.k.h We cannot show you
317 t.k.h information at this time
328 p 42
@ 1113 458 306 56 panel
469 t.k.c.h We cannot show your information at this time
481 p.g.c 28 You may be eligible for additional federal student aid. Review your loan balance, interest rate and repayment plan with your servicer before making changes. Contact the school listed to confirm your enrollment status and remaining amounts, then submit a request online.
@ 735 697 200 126 loose
697 card.sharp 126
707 t.s      Federal Student Aid    Loans    Grants    Forms    {r}Help
720 card.pink.sharp 15
723 p.g.s 7
750 t.b.s      Loan Details|View Payment History
755 t.s      {r}{r}
767 card 44
773 t.k.s Loan Status
785 card.pale.sharp 20
790 t.k.s.c Full disclosure
798 t.g.s.c Your loan was discharged on account of a program
`);

/* ---------- Grants ---------- */
const grantBody = (y, bar) => `
${y} card 150
${y + 9} t.h Grant Breakdown
${y + 22} donut 72 d74,g26 $4,000
${y + 105} rule
${y + 117} t {d}Pell Grants|$3,000|
${y + 128} rule
${y + 139} t {g}TEACH ⓘ|$1,000|
${y + 158} card 70
${y + 165} t.k Pell Lifetime Eligibility Used ⓘ
${y + 175} prog 11 ${bar}
${y + 194} t.b 450.0% used|150% remaining
${y + 207} t.g 5 years of grant aid
${y + 220} t.l.b Learn more about Pell eligibility`;
const teachBody = (y, bar) => `
${y} card 70
${y + 7} t.k TEACH Lifetime Eligibility Used ⓘ
${y + 17} prog 11 ${bar}
${y + 36} t.b 50.0% used|50% remaining
${y + 49} t.g 2 years of grant aid
${y + 62} t.l Learn more about TEACH eligibility`;
const grantTail = (y, chip) => `
${y} card 82
${y + 7} t.g Grant School
${y + 18} t.k.h James Madison University
${y + 32} t.l www.jmu.edu ↗
${y + 46} t.g.half Grants|Total Disbursed
${y + 53} t.half 2|$4,000
${y + 67} t.g Total Awarded Amount
${y + 75} t.b.hh $6,000
${y + 86} card.sharp 18
${y + 95} t.l.c View Grant Breakdown Details ›
${y + 110} card 42
${y + 122} t.k.h Aid Overpayment|${chip}
${y + 132} rule
${y + 141} t.l View Aid Overpayments`;
const grantCard = (y, n) => `
${y} card 66
${y + 8} t.k ${n}
${y + 25} t.g.half Award Year|Award Amount
${y + 32} t.half 2019-2020|$3,000
${y + 43} t.g.half Disbursed|Percentage Used
${y + 50} t.half $2,000|50%
${y + 69} card.sharp 17
${y + 77} t.l.c View Grant Details ›`;
group(80, 830, [['Grants', 537, 143, 826]], `
@ 111 207 132 234 phone.solid
251 t.g       Next Disbursement
258 t.g       $500.00
277 t.g       Next Disbursement
284 t.g       $500.00
302 t.l       View All ›
@ 478 250 60 10 loose
254 t.r.s Combine all grants
@ 461 360 70 32 loose
365 t.r.s Do not show if not eligible
371 t.r.s Only show if there are
377 t.r.s remaining
388 t.g.s See Modal
@ 368 453 118 108 panel
462 t.g Grant School
470 t.k.h James Madison University
485 t.l jmu.edu ↗
499 t.g.half Grants|Total Disbursed
506 t.half 2|$4,000
520 t.g Total Awarded
528 t.b.hh $6,000
542 rule
552 t.l.c View Details ›
@ 363 581 120 37 panel
590 t.k.h Aid Overpayment
598 rule.dark
608 t.l.c View Aid Overpayments ›
@ 537 198 131 516 phone
198 bar My Summary
215 tabs 1
${grantBody(240, 36)}
${teachBody(478, 50)}
${grantTail(556, '{g}None')}
@ 690 198 132 429 phone
198 bar My Grant Breakdown
228 t.g Grant School
237 t.k.h James Madison University
251 t.l jmu.edu ↗
265 t.k.half 2|$4,000
272 t.g.half Grants|Total Disbursed
280 t.g.half |Amount
295 t.b.hh $6,000
303 t.g Total Awarded Amount
317 t.k Sort By
321 fld 16 0 Award Year ⌄
${grantCard(346, 'Pell Grant')}
${grantCard(440, 'Pell Grant')}
${grantCard(534, 'TEACH Grant')}
@ 843 198 133 363 phone
198 bar Grant Details
229 t.g Grant
237 t.b.h Pell Grant
248 t.g James Madison University
257 t.g Harrisonburg, VA
266 card.navy.sharp 30
278 t.b.hh $3,000
287 t.s Award Amount
297 card.sharp 42
305 t.g.half Grant Year|Lifetime Used ⓘ
312 t.half 2019-2020|50%
324 t.g Last Reported
331 t $0.00
346 card 66
355 t.h Disbursements
374 t Award Amount|$3,000
387 rule
400 t Award Disbursed|$2,000
413 card.tint.sharp 27
423 t Remaining Amount|$1,000
431 t.g To Be Paid
450 t.g Grant Point of Contact
458 card 97
468 t.k James Madison University
482 t.l {b}jmu.edu ↗
495 t.l {b}finaid@jmu.edu
510 t.l {b}1-540-568-7820
524 t {k}800 Main St
532 t     Harrisonburg, VA
540 t     22807
@ 1005 333 114 69 panel
@ 1008 474 66 46 loose
478 t.g.s   Remaining Amount
485 t.g.s   to be paid out
502 t.g.s Last Disbursed
510 t.k.s Cumulative Total
@ 1202 198 133 489 phone
198 bar My Summary
215 tabs 1
232 card.warn.f 51
240 t.k {y}Aid Overpayment - Action
247 p 21
274 t.l.e.b Go to Aid Overpayments
${grantBody(292, 75)}
${grantTail(529, '[{y}Unresolved]')}
@ 1355 198 133 516 phone
198 bar My Summary
215 tabs 1
${grantBody(240, 75)}
${teachBody(478, 48)}
${grantTail(556, '{g}None')}
`);

/* ---------- Payment history ---------- */
const payRows = ys => ys.map(y => `
${y} card 22
${y + 8} t.g.third Payment Date|Amount|
${y + 15} t.third 03/08/2019|$500|                ⌄`).join('');
const payOpen = (y, chip = '{c}Posted') => `
${y} card.navy.sharp 25
${y + 8} t.third Payment Date|Amount|
${y + 15} t.third 03/08/2019|$500|                ⌃
${y + 25} row.pale 19 Status|${chip}
${y + 44} row 19 Type|Payment
${y + 63} row.pale 18 Principal|$300
${y + 81} row 19 Interest|$50
${y + 100} row.pale 17 Late Fees|$0.00
${y + 117} card.sharp 18
${y + 126} t.l.c View Payment Details ›`;
group(660, 720, [['Payment History', 99, 473, 827, -.5]], `
@ 103 92 131 20 panel.loose
101 t.g  ‹|Payment History|▣ 
@ 109 115 120 218 loose
123 t.g Great Lakes Higher Education
132 t.hh Payment History
149 t.l Make a payment
160 btn.out.sm 17 Filter by Date
${payRows([189, 218, 249, 279, 311])}
@ 246 35 131 19 panel.loose
44 t.g  ‹|Payment History|▣ 
@ 254 60 118 327 loose
68 t.g Great Lakes Higher Education
76 t.hh Payment History
92 t.l Make a payment
104 btn.out.sm 17 Filter by Date
${payOpen(130)}
${payRows([272, 303, 332, 364])}
@ 178 528 80 10 loose
533 t.g Starter Payment History
@ 446 528 80 10 loose
533 t.g More Payment Details
@ 610 505 96 10 loose
510 t Filter By Date or Amount
@ 103 558 131 228 phone
558 bar Payment History
587 t.g Great Lakes Higher Education
595 t.hh Payment History
614 t.l.b Make a payment|Filter by Date
620 rule.dark
${payRows([632, 663, 694, 725, 755])}
@ 387 558 130 228 phone
558 bar Payment Breakdown
576 card.navy.f 23
583 t.s Payment Date|Amount|
590 t 03/08/2019|$500|{c}{c}{c}
607 card 80
616 t Loan Name 1
626 row.pale 18 Applied to Principal|$250.50
644 row 18 Applied to Interest|$50.00
661 row.pale 26 Applied to Fees|$0.00
691 card 84
702 t Loan Name 2
712 row.pale 18 Applied to Principal|$250.50
730 row 18 Applied to Interest|$50.00
748 row.pale 26 Applied to Fees|$0.00
@ 246 558 131 342 phone
558 bar Payment History
587 t.g Great Lakes Higher Education
595 t.hh Payment History
614 t.l.b Make a payment|Filter by Date
620 rule.dark
${payOpen(631)}
${payRows([773, 804, 833, 865])}
@ 530 558 130 228 phone.solid
558 bar Filter by Date
586 t.b Date Range
598 t From
604 fld 19 1
634 t To
640 fld 17 1
672 btn.end 17 Filter by Date
@ 675 558 129 228 phone.solid
558 bar Filter by Date
586 t.b Date Range
598 t From
604 fld 19 1 04/01/2020
634 t To
640 fld 17 1 04/30/2020
672 btn.end 17 Filter by Date
@ 828 558 129 228 phone.solid
558 bar Filter by Date
575 card.err.strong.f 40
584 t.r.b {r}Error in Date Range
590 p 21
627 t.b Date Range
640 t From
645 fld 17 1 04/30/2020
674 t To
680 fld 18 1 04/01/2020
712 btn.end 17 Filter by Date
@ 114 947 121 24 loose
947 card.yel.sharp 24
956 t.g.third Payment Date|Amount|
963 t.third 03/08/2019|$500|                ⌄
@ 246 946 118 134 panel.loose
${payOpen(946, '[{y}Pending]')}
@ 1060 323 131 19 panel.loose
332 t.g  ‹|Payment History|▣ 
@ 1066 347 119 160 loose
356 t.g Great Lakes Higher Education
364 t.hh Payment History
381 t.l Make a payment
393 btn.out.sm 17 Filter by Date
414 card.mist 27
423 t.k.s Showing payments from|Reset Filter
431 t.k.s 04/01/2020 to 04/30/2020
${payRows([451, 481])}
@ 1060 558 131 228 phone
558 bar Payment History
587 t.g Great Lakes Higher Education
595 t.hh Payment History
614 t.l.b Make a payment|Filter by Date
620 rule.dark
624 card.mist.f 27
632 t.k.s Showing payments from|Reset Filter
640 t.k.s 04/01/2020 to 04/30/2020
${payRows([660, 690])}
`);

/* ---------- Servicers & providers ---------- */
group(1160, 790, [['Servicers & Providers', 79, 262, 898, -1.1]], `
@ 75 318 129 230 phone.teal
318 bar My Servicers & Schools
334 tabs 0 Servicers Schools
357 ico doc
391 t.c Servicers
405 t.c.s Contact your servicer for questions about
413 t.c.s plans, balances, deferment and repaying
422 t.c.s your loans.
435 card.sharp 58
441 ico none
475 t.k.c You currently do not have any
483 t.k.c Servicers.
@ 219 318 129 230 phone.teal
318 bar My Servicers & Schools
334 tabs 1 Servicers Schools
357 ico cap
391 t.c Schools
405 t.c.s Here is the schools you currently attend or
413 t.c.s attended. You can contact your school for
421 t.c.s information.
439 t.c.s To see your enrollment history go to
447 t.c.s My Enrollment in settings.
460 card.sharp 58
465 ico none
499 t.k.c You currently do not have any
507 t.k.c Schools.
@ 367 318 133 402 phone.teal
318 bar My Servicers & Schools
334 tabs 0 Servicers Schools
357 ico doc
391 t.c Servicers
405 t.c.s Contact your servicer for questions about
413 t.c.s plans, balances, deferment and repaying
422 t.c.s your loans.
435 card.sharp 131
${contact(444, 'Navient', 'navient')}
537 btn 24 Repay or Apply with Navient
571 card.sharp 141
${contact(581, 'Great Lakes Educational Loan', 'greatlakes')}
684 btn 24 Make a Payment
@ 511 318 133 339 phone.teal
318 bar My Servicers & Schools
334 tabs 1 Servicers Schools
357 ico cap
391 t.c Schools
405 t.c.s Here is the schools you currently attend or
413 t.c.s attended. You can contact your school for
421 t.c.s information.
439 t.c.s To see your enrollment history go to
447 t.c.s My Enrollment in settings.
460 card.sharp 91
${contact(469, 'Pennsylvania University', 'penn')}
558 card.sharp 92
${contact(567, 'James Madison University', 'jmu')}
@ 232 642 107 31 loose
642 btn 31 Make a Payment on<br>navient.com
@ 228 694 107 29 loose
694 btn 29 Make a Payment on<br>greatlakes.org
@ 776 291 80 10 loose
296 t.k Enrollment Breakdown
@ 943 454 60 9 loose
459 t.r.s Show if attended more
@ 1010 311 118 124 panel
311 card.navy.f.sharp 57
325 t.k.h Florida Learning College
333 t.k - Brandon
345 t.s.half Current Status|Effective Date
352 t.s.half Full Time Enrolled|09/25/2018
359 t.s Graduated
377 t.g.half Program|Enrollment
384 t.k Bachelor of Science
391 t.k.half Computer|Program Level
398 t.k.half Engineering|2
418 t.g Begin Date
425 t 09/25/2018
@ 1012 457 116 207 panel
465 t.k.h Bachelor of Fine Arts,
473 t.k.h Enrolled in Department of
481 t.k.h Computing
490 t.g Graduated
503 t.g Program
510 p 14
532 card.pale.f 32
541 t.s.e Bachelor of Sci
549 t.s Credential Level|Major Program
557 t.s.e Certificate
566 row 17 Effective Date|09/25/2018
585 row.pale 15 Program Level|4
602 row 16 Begin Date|09/25/2018
618 row.pale 28 Enrollment Status|Full Time
655 t.l.c View more ›
`);

/* ---------- Enrollment ---------- */
const program = (y, name, h = 64) => `
${y} card.tint.sharp 26
${y + 9} t.k ${name}
${y + 16} t.g 09/25/2018
${y + 26} card.sharp ${h - 28}
${y + 34} t.g Program
${y + 41} t.k Life Sciences Biology|⌄
${y + 47} t Second Language`;
const intro = y => `\n${y} p.k 35\n${y + 48} btn.out 22 Add Enrollment\n${y + 85} t.g.b Program Enrollment History ⓘ`;
const schoolHead = (y, h, name) => `
${y} card.navy.sharp ${h}
${y + 10} t.k ${name}
${y + 18} t.s College Park
${y + 30} t.s Current Status
${y + 37} t.s Full Time
${y + 48} t.s Effective Date
${y + 55} t.s 09/25/2018`;
const school = (y, h, name) => schoolHead(y, h, name) + `
${y + h} card.sharp 28
${y + h + 8} t.g Program
${y + h + 16} t.k Life Sciences Biology|⌄
${y + h + 23} t Second Language`;
const enrollTop = `
318 bar My Enrollment
350 t.h My Enrollment ⓘ
367 t.g.b Current Enrollment`;
const BUS = 'Boston School of Business / Med';
const FLA = 'Florida Learning College - Brandon';
const UMD = 'University of Maryland - College';
const marked = `
376 card.orange 101
388 t.s College Park
408 t.s Current Status
415 t.s Full Time
427 t.s Effective Date
434 t.s 09/25/2018
456 t.g Program
464 t Life Sciences`;
const markedProgram = `
670 card.peach 56
681 t.k Florida Learning College
688 t.g 09/25/2018
704 t.g Program
711 t Life Sciences Biology`;
const longProgram = y => `
${y} card.tint.sharp 36
${y + 10} t.k ${BUS}
${y + 18} t.k - Buffalo College - Orlando
${y + 26} t.g 09/25/2018
${y + 36} card.sharp 34
${y + 46} t.g Program
${y + 53} t.k Life Sciences Biology|⌄
${y + 60} t Second Language`;
const umdProgram = y => `
${y} card.tint.sharp 36
${y + 10} t.k ${UMD}
${y + 18} t.k Park
${y + 27} t.g 09/25/2018
${y + 36} card.sharp 26
${y + 43} t.g Program
${y + 50} t.k Undeclared|⌄`;
group(1520, 790, [['Enrollment', 107, 262, 1667, .5]], `
@ 220 46 132 131 phone.solid
46 card.tealbox.f 4
57 p.k 91
160 t.l.e.b Back
@ 99 318 129 684 phone
${enrollTop}
${school(376, 61, FLA)}
${school(474, 62, BUS)}
${intro(569)}
${markedProgram}
${program(734, BUS, 54)}
${program(794, BUS)}
${program(860, BUS)}
${longProgram(926)}
@ 249 318 131 792 phone
${enrollTop}
${school(376, 61, FLA)}
${school(474, 62, BUS)}
${intro(569)}
${markedProgram}
734 row 24 Credential Level|Major Program
760 row.pale 20 Effective Date|09/25/2018
780 row 17 Length in Weeks|4
797 row.pale 18 Begin Date|09/25/2018
815 row 17 Enrollment Status|Full Time
${program(840, BUS, 54)}
${program(899, BUS)}
${program(965, BUS)}
${longProgram(1031)}
@ 418 318 129 570 phone
${enrollTop}
${schoolHead(376, 71, UMD)}
${intro(454)}
550 card.tint.sharp 33
562 t.k Florida Learning College -
569 t.k - Brandon
584 card.sharp 27
595 t.g Program
602 t.k Life Sciences Biology|⌄
${program(620, BUS, 54)}
${program(678, BUS)}
${program(744, BUS)}
${longProgram(810)}
@ 569 318 130 467 phone
${enrollTop}
${marked}
${intro(485)}
${umdProgram(582)}
${program(650, BUS)}
${program(718, BUS, 60)}
@ 722 318 130 537 phone
${enrollTop}
${marked}
478 card.sharp 68
488 t.e Major Program
496 t.g Credential Level|Certificate
510 row.pale 18 Length in Weeks|4
538 t.g Begin Date|09/25/2018
${intro(554)}
${umdProgram(651)}
${program(719, BUS)}
${program(787, BUS, 60)}
@ 939 318 132 230 phone.solid
318 bar Add Enrollment
346 t.k.h My Programs
357 btn.out 20 Add School
521 btn.off 22 Submit Request
@ 1086 318 132 230 phone.solid
318 bar Add School
349 t.k Name of School
354 fld 16 0
383 t.k Enrollment Status
389 fld 16 0
418 t.k Enrollment Effective Date
425 fld 15 1
521 btn.off 22 Add School
@ 1239 318 132 230 phone.solid
318 bar Add School
349 t.k Name of School
354 fld 16 0 Boston College
383 t.k Enrollment Status
389 fld 16 0 Full Time, over 12 credits
418 t.k Enrollment Effective Date
425 fld 15 1 04/08/2020
521 btn 22 Add School
@ 1407 318 132 230 phone.solid
318 bar Add Enrollment
346 t.k.h My Programs
358 card 54
367 t.k Fitchburg State University
374 t.g 04/08/2020
387 t.half.g Status|Effective Date
394 t.k.half FT|Enrolled
402 t.half |09/25/2018
419 btn.out 22 Add School
521 btn 22 Submit Request
@ 1511 351 28 24 loose
351 card.blob 24
@ 1570 318 130 230 phone
318 bar My Enrollment
341 t.b Request submitted
354 btn.out 21 Add Enrollment
392 t.g.b Pending Enrollment Request ⓘ
403 card 46
411 t.k.h Fitchburg State University|⋮
419 t.g 04/08/2020
433 t.g Enrollment Status
440 t Full Time
463 t.g.b Program Enrollment History ⓘ
473 card.tint.sharp 32
483 t.k University of Maryland - College
490 t.k Park
498 t.g 09/25/2018
505 card.deep.sharp 31
516 t.k Your school has been notified of
524 t.k your request.
@ 1721 318 131 537 phone
${enrollTop}
${school(376, 68, UMD)}
485 p.k 35
533 btn.out 21 Add Enrollment
569 t.g.b Pending Enrollment Request ⓘ
580 card 47
589 t.k.h Fitchburg State University|⋮
597 t.g 04/08/2020
611 t.g Enrollment Status
618 t Full Time
643 t.g.b Program Enrollment History ⓘ
${umdProgram(651)}
${program(719, BUS)}
${program(787, BUS, 60)}
`);

/* ---------- Inconsistencies ---------- */
group(240, 1220, [['Inconsistencies', 54, 139, 827, -1]], `
@ 88 282 126 90 white
296 t.k.hh Subsidized Loan Eligibility
314 prog.lime 11 38
331 t.k.s 4.7 Academic Years|1.3 Academic Years
347 t.l.b.c Learn more about subsidized loans
361 t.g Remaining Period ⓘ
370 t.g.s 1.3 years
@ 84 378 130 85 white
391 t.k.h Pell Lifetime Eligibility Used
408 t.l.b Learn more about Pell eligibility
422 prog.lime 12 29
442 t.k.s 450% used|150% remaining
452 t.b.c Lifetime usage percentage
@ 89 479 126 76 white
491 t.h Repayment Details
508 t.b.s Repayment Progress ⓘ
515 prog.lime 13 64
537 t.b $30,000 Paid of 40k|$10,000
551 t.b.s Total Original Amount ⓘ
@ 87 570 120 114 white
584 t.h.c Repayment Progress
599 prog.lime 11 76
620 t.b.c $30,000 Paid of 40k
632 t.g.c Original 40k
650 t.c Total Original Amount: $40,000
671 t.g.c.s The federal student amounts include principal
678 t.g.c.s from all of your reported loan servicers
@ 190 275 10 9 loose
279 t.l {b}
@ 82 291 10 8 loose
295 t.l {b}
@ 82 408 10 8 loose
412 t.l {b}
@ 344 246 92 22 loose
250 t.r.s Should grant cards and loans
257 t.r.s display dates and amounts the same
264 t.r.s way here
@ 269 278 116 90 panel
289 t.k.h Pell Grant
298 rule
308 t.g.half Award Year|Award Amount
315 t.half 2019-2020|$3,000
328 t.g.half Disbursed|Percentage Used
334 t.half $2,000|50%
349 rule.dark
359 t.l.c View Grant Details ›
@ 408 278 118 142 panel
289 t.k.h Subsidized Loan
298 t.g Outstanding principal and interest
306 rule
320 t.b.half 3.76%|09/25/2018
327 t.g.half Interest|Loan Date
342 t {b}In Repayment
350 t.g Loan Status
363 t Income-Based Repayment
371 t.g Repayment Plan
384 t.b $3,000
393 t.g Total Balance
404 rule.dark
413 t.l.c View Loan Details ›
@ 742 249 90 8 loose
253 t.r.s Font size and weight should match
@ 645 278 130 338 white
292 t.hh.c 8 Loans
304 t.g.c Loan Summary
315 t.l.c View Breakdown
328 donut 108 b99,n1 $10,000
451 t.hh {b}$9,500|{n}$500
462 t.g Principal ⓘ|Interest ⓘ
484 t.b Related Links
494 rule
507 t.l.u Explore Repayment Options
517 rule
529 t.l.u Find Loan Servicer
539 rule
550 t.l.u Apply for Public Service Loan
558 t.l.u Forgiveness (PSLF)
569 rule
580 t.l.u Apply for Income-Driven Repayment
592 rule
605 t.l.u Consolidate Federal Loans
@ 789 278 129 240 white
292 t.h Loan Types
308 donut 100 b58,n10,g32 $10,000
421 rule
433 t.b {g}Subsidized Loans|$3,000|›
444 rule
455 t.b {b}Unsubsidized Loan|$6,000|›
466 rule
478 t.b {n}Other|$1,000|›
503 t.l.c View Individual Loans
@ 1076 226 96 16 loose
230 t.r.s This graph should look the same as the
237 t.r.s screens
@ 1062 264 131 316 white
270 donut 104 b96,n4 $1,000
386 t.hh   {b}$950|{n}$50
397 t.g   Principal ⓘ|Interest ⓘ
412 t.g.c Data reported as of date${facts(430, 21, 3)}
493 t.l.u View Loan Status History
506 t.g Outstanding Balance ⓘ
515 t $9,500.00
530 t.g Loan Type ⓘ
539 t Direct Loan
552 t.g Total Outstanding Balance Due ⓘ
561 t $100.00
571 t.l.u Learn more about this loan type
@ 1372 247 86 16 loose
251 t.r.s These tables should look similar for
258 t.r.s loans and grants
@ 1269 264 198 131 white
284 t.h     Disbursements
358 t   Award Amount|$3,000
366 rule
375 t   Remaining Amount to be paid|$1,000
@ 1284 297 110 42 loose
297 card.tint.sharp 42
310 t.c Amount disbursed
325 t.c <b style="font-size:14px;font-weight:400">$2,000</b>
@ 1404 305 60 18 loose
310 t.s Remaining to be paid
318 t.s $500.00
@ 1298 410 131 119 white
425 t.h Disbursements
441 t.b.s Disbursement Date ⓘ|Amount ⓘ
449 rule.dark
457 t 04/16/2020|$500
466 rule
475 t 04/16/2020|$500
489 rule
505 t.s Total amount disbursed ⓘ|<b style="font-size:13px;font-weight:400">$5,000</b>
518 t.g.e.s Loan of $5,000
`);

/* ---------- References ---------- */
const refRows = [];
for (let i = 0; i < 46; i++) {
  const names = ['School', 'Award Year', 'Loan Status', 'GA', 'Enrollment Status', 'Outstanding Interest', 'ID', 'Remaining Amount', 'Disbursement Date'];
  const vals = ['10,000', 'Yes', '$3,500.00', '04/08/2020', 'Full Time', 'N/A'];
  refRows.push(`${70 + i * 18} row.ref${i % 3 === 1 ? '.pale' : ''} 18 ${names[(i * 5) % 9]}|${vals[(i * 7) % 6]}`);
}
group(1550, 1290, [['REFERENCES', 12, -46, 902, .4]], `
@ 72 14 110 240 loose
26 t.b.c.l ⊙ Filters
42 fld.blue 16 0 Enrollment Status
72 fld.blue 14 0 Loan Type
102 fld.blue 14 0 School Name
132 fld.blue 14 0 Award Year
172 fld.blue 14 0 Servicer
@ 208 206 34 16 loose
207 btn.green 14 New
@ 88 232 60 17 loose
240 t.l.c Clear
@ 155 232 70 20 loose
232 btn 20 Apply
@ 289 14 140 890 loose
26 t.b.c ⊙ Filters
40 btn 18 NSLDS Data Field Reference
${refRows.join('\n')}
`);
```
